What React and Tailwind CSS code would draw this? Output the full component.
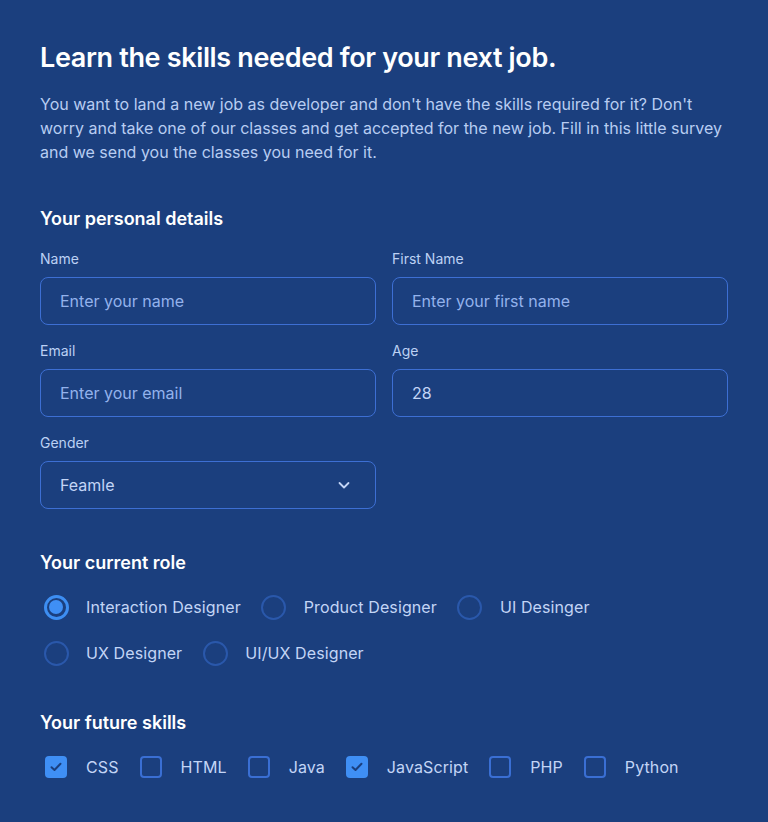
import React from "react";

const font = { fontFamily: "Inter, 'Noto Sans', sans-serif" };

function Field({ label, placeholder, value }) {
  return (
    <div className="flex flex-col gap-2">
      <label className="text-sm leading-5 text-[#bcd1f4]">{label}</label>
      <div className="h-12 rounded-lg border border-[#3d6fd3] flex items-center pl-[19px] pr-5">
        {value ? (
          <span className="text-base text-[#c3d5f6]">{value}</span>
        ) : (
          <span className="text-base text-[#93b2ec]">{placeholder}</span>
        )}
      </div>
    </div>
  );
}

function Radio({ label, checked }) {
  return (
    <div className="flex items-center gap-3.5">
      <div className="w-8 h-8 flex items-center justify-center">
        {checked ? (
          <div className="w-[25px] h-[25px] rounded-full border-[3px] border-[#3d8ef2] flex items-center justify-center">
            <div className="w-3.5 h-3.5 rounded-full bg-[#3f8ff5]" />
          </div>
        ) : (
          <div className="w-[25px] h-[25px] rounded-full border-2 border-[#2a58ab]" />
        )}
      </div>
      <span className="text-base text-[#c3d5f6] tracking-[0.1px]">{label}</span>
    </div>
  );
}

function Check({ label, checked }) {
  return (
    <div className="flex items-center gap-3.5">
      <div className="w-8 h-8 flex items-center justify-center">
        {checked ? (
          <div className="w-[22px] h-[22px] rounded-[4px] bg-[#3f8ff5] flex items-center justify-center">
            <svg width="12" height="10" viewBox="0 0 12 10" fill="none">
              <path d="M1.5 5.2 L4.5 8 L10.5 1.8" stroke="#1b3f7e" strokeWidth="2" strokeLinecap="round" strokeLinejoin="round" />
            </svg>
          </div>
        ) : (
          <div className="w-[22px] h-[22px] rounded-[4px] border-2 border-[#3a6fd4]" />
        )}
      </div>
      <span className="text-base text-[#c3d5f6] tracking-[0.1px]">{label}</span>
    </div>
  );
}

export default function App() {
  return (
    <div className="min-h-screen w-full bg-[#1b3f7e] px-10 pt-10 pb-10" style={font}>
      <h1 className="text-[27px] leading-9 font-semibold text-white tracking-[-0.35px]">
        Learn the skills needed for your next job.
      </h1>
      <p className="mt-4 text-base leading-6 text-[#b8cdf2]">
        You want to land a new job as developer and don't have the skills required for it? Don't worry and take one of our classes and get accepted for the new job. Fill in this little survey and we send you the classes you need for it.
      </p>

      <h2 className="mt-[41px] text-lg leading-7 font-semibold text-white">Your personal details</h2>
      <div className="mt-4 grid grid-cols-2 gap-x-4 gap-y-4">
        <Field label="Name" placeholder="Enter your name" />
        <Field label="First Name" placeholder="Enter your first name" />
        <Field label="Email" placeholder="Enter your email" />
        <Field label="Age" value="28" />
        <div className="flex flex-col gap-2">
          <label className="text-sm leading-5 text-[#bcd1f4]">Gender</label>
          <div className="h-12 rounded-lg border border-[#3d6fd3] flex items-center justify-between pl-[19px] pr-6">
            <span className="text-base text-[#c3d5f6]">Feamle</span>
            <svg width="14" height="14" viewBox="0 0 14 14" fill="none">
              <path d="M2.5 5 L7 9.5 L11.5 5" stroke="#c3d5f6" strokeWidth="1.8" strokeLinecap="round" strokeLinejoin="round" />
            </svg>
          </div>
        </div>
      </div>

      <h2 className="mt-10 text-lg leading-7 font-semibold text-white">Your current role</h2>
      <div className="mt-[14px] flex flex-wrap gap-x-[17px] gap-y-3.5 w-[580px]">
        <Radio label="Interaction Designer" checked />
        <Radio label="Product Designer" />
        <Radio label="UI Desinger" />
        <Radio label="UX Designer" />
        <Radio label="UI/UX Designer" />
      </div>

      <h2 className="mt-10 text-lg leading-7 font-semibold text-white">Your future skills</h2>
      <div className="mt-[14px] flex flex-wrap gap-x-4">
        <Check label="CSS" checked />
        <Check label="HTML" />
        <Check label="Java" />
        <Check label="JavaScript" checked />
        <Check label="PHP" />
        <Check label="Python" />
      </div>
    </div>
  );
}
